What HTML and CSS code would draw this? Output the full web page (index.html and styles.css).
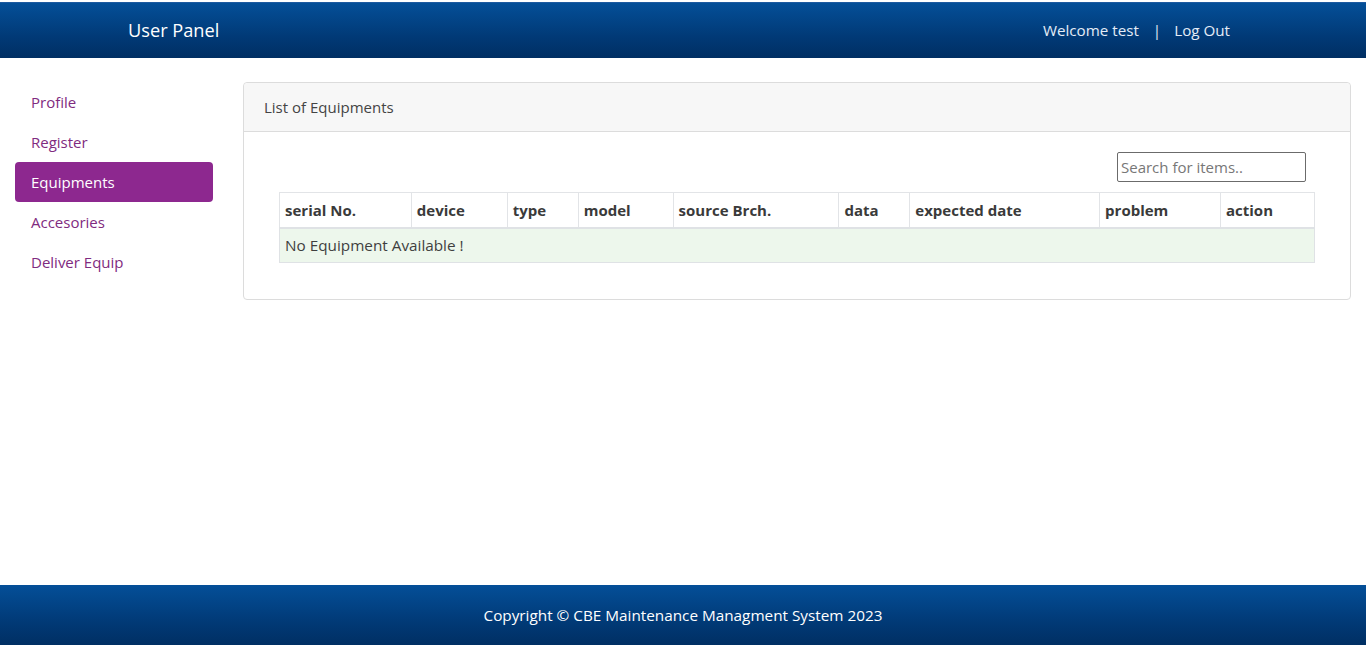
FILE: index.html
```html
<!DOCTYPE html>
<html lang="en">
<head>
<meta charset="utf-8">
<title>User Panel</title>
<link rel="stylesheet" href="styles.css">
</head>
<body>
<div class="page">
  <header class="topbar">
    <div class="brand">User Panel</div>
    <nav class="userbox">
      <span class="welcome">Welcome test</span>
      <span class="sep">|</span>
      <a class="logout" href="#">Log Out</a>
    </nav>
  </header>
  <main class="main">
    <aside class="sidebar">
      <a class="nav-item" href="#">Profile</a>
      <a class="nav-item" href="#">Register</a>
      <a class="nav-item active" href="#">Equipments</a>
      <a class="nav-item" href="#">Accesories</a>
      <a class="nav-item" href="#">Deliver Equip</a>
    </aside>
    <section class="card">
      <div class="card-header">List of Equipments</div>
      <div class="card-body">
        <div class="search-row">
          <input class="search" type="text" placeholder="Search for items..">
        </div>
        <table class="equip-table">
          <thead>
            <tr>
              <th class="c-serial">serial No.</th>
              <th class="c-device">device</th>
              <th class="c-type">type</th>
              <th class="c-model">model</th>
              <th class="c-source">source Brch.</th>
              <th class="c-data">data</th>
              <th class="c-expected">expected date</th>
              <th class="c-problem">problem</th>
              <th class="c-action">action</th>
            </tr>
          </thead>
          <tbody>
            <tr class="empty-row">
              <td colspan="9">No Equipment Available !</td>
            </tr>
          </tbody>
        </table>
      </div>
    </section>
  </main>
  <footer class="footer">Copyright © CBE Maintenance Managment System 2023</footer>
</div>
</body>
</html>
```
FILE: styles.css
```css
* { box-sizing: border-box; }
html, body { margin: 0; padding: 0; }
body {
  font-family: "Open Sans", "Noto Sans", "Liberation Sans", sans-serif;
  color: #333;
  background: #fff;
}
.page {
  display: flex;
  flex-direction: column;
  height: 645px;
}
.topbar {
  margin-top: 2px;
  height: 56px;
  background: linear-gradient(to bottom, #044f98 0%, #013a77 60%, #002f63 100%);
  display: flex;
  align-items: center;
  justify-content: space-between;
  padding: 0 136px 1px 128px;
  border-top: 1px solid #1d5aa0;
}
.brand {
  color: #fff;
  font-size: 18.2px;
}
.userbox {
  display: flex;
  align-items: center;
  color: #e4ecf7;
  font-size: 15.2px;
}
.sep { margin: 0 13px 0 14px; }
.logout { color: #e4ecf7; text-decoration: none; }
.main {
  flex: 1;
  display: flex;
  align-items: flex-start;
  padding: 24px 15px 0 15px;
  gap: 30px;
}
.sidebar {
  width: 198px;
  display: flex;
  flex-direction: column;
}
.nav-item {
  display: block;
  height: 40px;
  line-height: 40px;
  padding-left: 16px;
  color: #7f2b80;
  text-decoration: none;
  font-size: 15px;
  border-radius: 4px;
}
.nav-item.active {
  background: #8d288f;
  color: #fff;
}
.card {
  flex: 1;
  border: 1px solid #dcdcdc;
  border-radius: 4px;
  background: #fff;
}
.card-header {
  height: 49px;
  line-height: 48px;
  padding-left: 20px;
  background: #f7f7f7;
  border-bottom: 1px solid #dcdcdc;
  color: #444;
  font-size: 15px;
  border-radius: 4px 4px 0 0;
}
.card-body {
  padding: 20px 35px 36px 35px;
}
.search-row {
  display: flex;
  justify-content: flex-end;
  padding-right: 9px;
  margin-bottom: 10px;
}
.search {
  width: 189px;
  height: 30px;
  border: 1px solid #6b6b6b;
  border-radius: 2px;
  padding: 0 3px;
  font-family: inherit;
  font-size: 15px;
  color: #333;
}
.search::placeholder { color: #777; }
.equip-table {
  width: 1036px;
  border-collapse: collapse;
  font-size: 15px;
}
.equip-table th {
  text-align: left;
  font-weight: 700;
  color: #3a3a3a;
  height: 35px;
  padding: 0 5px;
  border: 1px solid #e2e4e7;
  border-bottom: 2px solid #dfe2e5;
}
.c-serial { width: 132px; }
.c-device { width: 96px; }
.c-type { width: 71px; }
.c-model { width: 95px; }
.c-source { width: 166px; }
.c-data { width: 71px; }
.c-expected { width: 190px; }
.c-problem { width: 121px; }
.c-action { width: 94px; }
.empty-row td {
  background: #edf7ec;
  height: 35px;
  padding: 0 5px;
  color: #3f3f3f;
  font-size: 15.3px;
  border: 1px solid #dfe2e5;
}
.footer {
  height: 60px;
  background: linear-gradient(to bottom, #044f98 0%, #013a77 60%, #002f63 100%);
  color: #fff;
  display: flex;
  align-items: center;
  justify-content: center;
  font-size: 15.3px;
}
```
